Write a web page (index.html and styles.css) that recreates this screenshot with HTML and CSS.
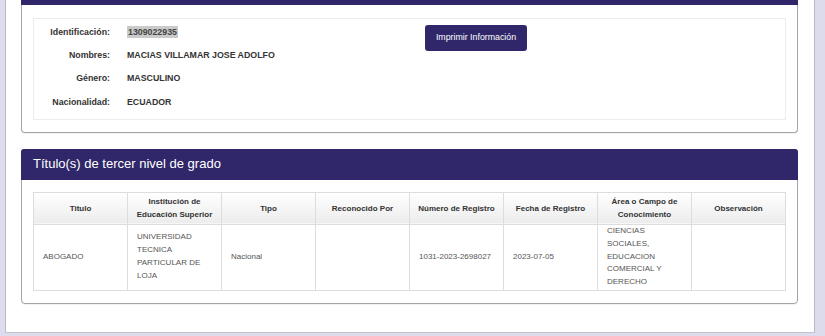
FILE: index.html
```html
<!DOCTYPE html>
<html lang="es">
<head>
<meta charset="utf-8">
<link rel="stylesheet" href="styles.css">
</head>
<body>
<div class="page">
  <section class="panel panel-first">
    <div class="panel-heading panel-heading-cut"></div>
    <div class="panel-body">
      <div class="well">
        <div class="info">
          <div class="row"><span class="label">Identificación:</span><span class="value"><span class="sel">1309022935</span></span></div>
          <div class="row"><span class="label">Nombres:</span><span class="value">MACIAS VILLAMAR JOSE ADOLFO</span></div>
          <div class="row"><span class="label">Género:</span><span class="value">MASCULINO</span></div>
          <div class="row"><span class="label">Nacionalidad:</span><span class="value">ECUADOR</span></div>
        </div>
        <div class="actions">
          <button class="btn">Imprimir Información</button>
        </div>
      </div>
    </div>
  </section>

  <section class="panel">
    <div class="panel-heading">Título(s) de tercer nivel de grado</div>
    <div class="panel-body">
      <table class="grid">
        <thead>
          <tr>
            <th>Titulo</th>
            <th>Institución de Educación Superior</th>
            <th>Tipo</th>
            <th>Reconocido Por</th>
            <th>Número de Registro</th>
            <th>Fecha de Registro</th>
            <th>Área o Campo de Conocimiento</th>
            <th>Observación</th>
          </tr>
        </thead>
        <tbody>
          <tr>
            <td>ABOGADO</td>
            <td>UNIVERSIDAD TECNICA PARTICULAR DE LOJA</td>
            <td>Nacional</td>
            <td></td>
            <td>1031-2023-2698027</td>
            <td>2023-07-05</td>
            <td>CIENCIAS SOCIALES, EDUCACION COMERCIAL Y DERECHO</td>
            <td></td>
          </tr>
        </tbody>
      </table>
    </div>
  </section>
</div>
</body>
</html>
```

FILE: styles.css
```css
html, body {
  margin: 0;
  padding: 0;
}
body {
  background: #dcdcec;
  font-family: "Liberation Sans", Arial, sans-serif;
  color: #333;
  height: 336px;
  overflow: hidden;
}
.page {
  margin-left: 5px;
  width: 810px;
  height: 333px;
  background: #fff;
  border-left: 1px solid #b9b9c6;
  border-right: 1px solid #b9b9c6;
  border-bottom: 1px solid #c4c4cc;
  padding: 0 16px 0 15px;
  box-sizing: border-box;
}
.panel {
  border: 1px solid #a3a3a8;
  border-radius: 4px;
  background: #fff;
  box-shadow: 0 1px 1px rgba(0,0,0,0.06);
  margin-bottom: 16px;
}
.panel-first {
  border-top: none;
  border-radius: 0 0 4px 4px;
}
.panel-heading {
  background: #2f2769;
  color: #fff;
  font-size: 13px;
  height: 31px;
  line-height: 30px;
  padding: 0 12px;
  border-radius: 3px 3px 0 0;
  margin: -1px -1px 0 -1px;
}
.panel-heading-cut {
  height: 5px;
  line-height: 5px;
  margin-top: 0;
  border-radius: 0;
}
.panel-body {
  padding: 12px 11px 12px 11px;
}
.panel-first .panel-body {
  padding-top: 13px;
}
.well {
  border: 1px solid #ececec;
  background: #fff;
  display: flex;
  padding: 1px 0 5px 0;
}
.info {
  width: 391px;
}
.row {
  display: flex;
  align-items: center;
  height: 23.4px;
  font-size: 8.8px;
  font-weight: bold;
}
.label {
  width: 76px;
  text-align: right;
  color: #333;
}
.value {
  margin-left: 17px;
  color: #333;
}
.sel {
  background: #cacaca;
  padding: 1px 1px;
  color: #444;
}
.actions {
  padding-top: 5px;
}
.btn {
  background: #2f2769;
  color: #fff;
  border: none;
  border-radius: 3px;
  font-family: "Liberation Sans", Arial, sans-serif;
  font-size: 8.8px;
  height: 26px;
  width: 102px;
  padding: 0 0 2px 0;
}
.grid {
  width: 100%;
  border-collapse: collapse;
  table-layout: fixed;
  font-size: 8px;
}
.grid th, .grid td {
  border: 1px solid #dddddd;
}
.grid th {
  height: 31px;
  background: linear-gradient(#ffffff, #ececec);
  font-weight: bold;
  color: #333;
  line-height: 13px;
  padding: 0 3px;
  text-align: center;
  vertical-align: middle;
}
.grid td {
  height: 65px;
  color: #555;
  line-height: 12.8px;
  padding: 0 8px 0 9px;
  vertical-align: middle;
  text-align: left;
}
```
